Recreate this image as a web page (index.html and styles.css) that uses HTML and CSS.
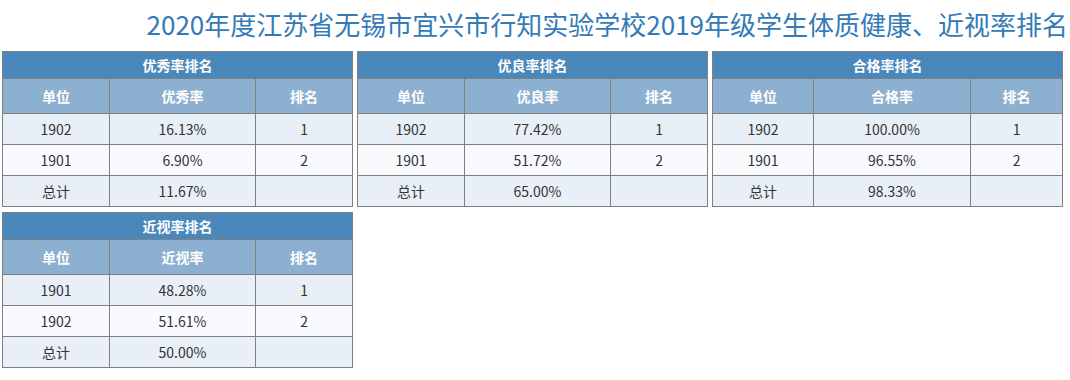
FILE: index.html
```html
<!DOCTYPE html>
<html lang="zh-CN">
<head>
<meta charset="utf-8">
<title>体质健康排名</title>
<link rel="stylesheet" href="styles.css">
</head>
<body>
<h1 class="page-title">2020年度江苏省无锡市宜兴市行知实验学校2019年级学生体质健康、近视率排名</h1>
<div class="tables">
  <table class="rank">
    <colgroup><col class="c1"><col class="c2"><col class="c3"></colgroup>
    <tr class="caption-row"><th colspan="3">优秀率排名</th></tr>
    <tr class="head-row"><th>单位</th><th>优秀率</th><th>排名</th></tr>
    <tr class="odd"><td>1902</td><td>16.13%</td><td>1</td></tr>
    <tr class="even"><td>1901</td><td>6.90%</td><td>2</td></tr>
    <tr class="odd"><td>总计</td><td>11.67%</td><td></td></tr>
  </table>
  <table class="rank">
    <colgroup><col class="c1"><col class="c2"><col class="c3"></colgroup>
    <tr class="caption-row"><th colspan="3">优良率排名</th></tr>
    <tr class="head-row"><th>单位</th><th>优良率</th><th>排名</th></tr>
    <tr class="odd"><td>1902</td><td>77.42%</td><td>1</td></tr>
    <tr class="even"><td>1901</td><td>51.72%</td><td>2</td></tr>
    <tr class="odd"><td>总计</td><td>65.00%</td><td></td></tr>
  </table>
  <table class="rank wide">
    <colgroup><col class="c1"><col class="c2"><col class="c3"></colgroup>
    <tr class="caption-row"><th colspan="3">合格率排名</th></tr>
    <tr class="head-row"><th>单位</th><th>合格率</th><th>排名</th></tr>
    <tr class="odd"><td>1902</td><td>100.00%</td><td>1</td></tr>
    <tr class="even"><td>1901</td><td>96.55%</td><td>2</td></tr>
    <tr class="odd"><td>总计</td><td>98.33%</td><td></td></tr>
  </table>
  <table class="rank">
    <colgroup><col class="c1"><col class="c2"><col class="c3"></colgroup>
    <tr class="caption-row"><th colspan="3">近视率排名</th></tr>
    <tr class="head-row"><th>单位</th><th>近视率</th><th>排名</th></tr>
    <tr class="odd"><td>1901</td><td>48.28%</td><td>1</td></tr>
    <tr class="even"><td>1902</td><td>51.61%</td><td>2</td></tr>
    <tr class="odd"><td>总计</td><td>50.00%</td><td></td></tr>
  </table>
</div>
</body>
</html>
```

FILE: styles.css
```css
html, body {
  margin: 0;
  padding: 0;
  background: #ffffff;
}
body {
  font-family: "Noto Sans CJK SC", "Noto Sans", sans-serif;
  color: #333333;
}
.page-title {
  margin: 0;
  padding: 9px 2px 0 0;
  height: 42px;
  box-sizing: border-box;
  font-size: 26px;
  line-height: 30px;
  font-weight: normal;
  color: #337ab7;
  text-align: right;
  white-space: nowrap;
}
.tables {
  display: grid;
  grid-template-columns: repeat(3, 350px);
  gap: 5px 5px;
  padding: 9px 0 0 2px;
  align-items: start;
}
.rank {
  border-collapse: collapse;
  table-layout: fixed;
  width: 350px;
  font-size: 14px;
}
.rank .c1 { width: 107px; }
.rank .c2 { width: 146px; }
.rank .c3 { width: 97px; }
.rank.wide .c1 { width: 101px; }
.rank.wide .c2 { width: 157px; }
.rank.wide .c3 { width: 92px; }
.rank th,
.rank td {
  border: 1px solid #808080;
  padding: 0;
  text-align: center;
  vertical-align: middle;
}
.caption-row th {
  height: 26px;
  background: #4a87ba;
  color: #ffffff;
  font-weight: bold;
}
.head-row th {
  height: 34px;
  background: #8db0d0;
  color: #ffffff;
  font-weight: bold;
}
.rank td {
  height: 30px;
  color: #333333;
}
.odd td { background: #e8eff7; }
.even td { background: #f8fafe; }
```
